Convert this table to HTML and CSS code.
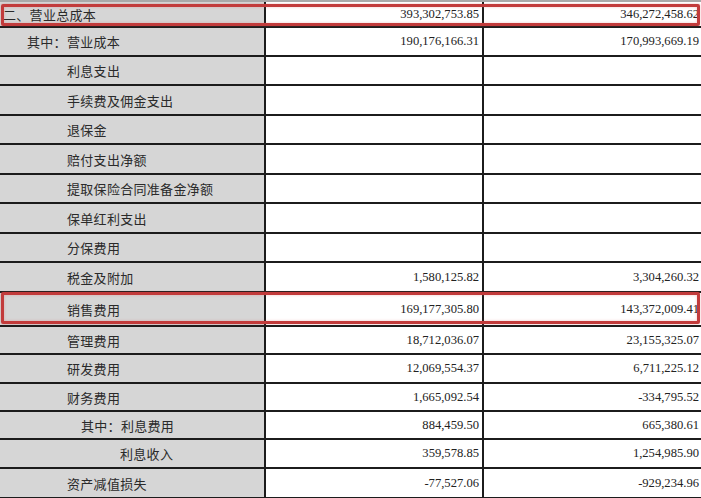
FILE: index.html
```html
<!DOCTYPE html>
<html lang="zh">
<head>
<meta charset="utf-8">
<link rel="stylesheet" href="styles.css">
</head>
<body>
<div class="sheet">
  <div class="row h26"><div class="label l0">二、营业总成本</div><div class="num">393,302,753.85</div><div class="num last">346,272,458.62</div></div>
  <div class="row h29"><div class="label l1">其中：营业成本</div><div class="num">190,176,166.31</div><div class="num last">170,993,669.19</div></div>
  <div class="row h29"><div class="label l2">利息支出</div><div class="num"></div><div class="num last"></div></div>
  <div class="row h30"><div class="label l2">手续费及佣金支出</div><div class="num"></div><div class="num last"></div></div>
  <div class="row h29"><div class="label l2">退保金</div><div class="num"></div><div class="num last"></div></div>
  <div class="row h30"><div class="label l2">赔付支出净额</div><div class="num"></div><div class="num last"></div></div>
  <div class="row h29"><div class="label l2">提取保险合同准备金净额</div><div class="num"></div><div class="num last"></div></div>
  <div class="row h30"><div class="label l2">保单红利支出</div><div class="num"></div><div class="num last"></div></div>
  <div class="row h29"><div class="label l2">分保费用</div><div class="num"></div><div class="num last"></div></div>
  <div class="row h30"><div class="label l2">税金及附加</div><div class="num">1,580,125.82</div><div class="num last">3,304,260.32</div></div>
  <div class="row h34"><div class="label l2">销售费用</div><div class="num">169,177,305.80</div><div class="num last">143,372,009.41</div></div>
  <div class="row h28"><div class="label l2">管理费用</div><div class="num">18,712,036.07</div><div class="num last">23,155,325.07</div></div>
  <div class="row h29"><div class="label l2">研发费用</div><div class="num">12,069,554.37</div><div class="num last">6,711,225.12</div></div>
  <div class="row h28"><div class="label l2">财务费用</div><div class="num">1,665,092.54</div><div class="num last">-334,795.52</div></div>
  <div class="row h28"><div class="label l3">其中：利息费用</div><div class="num">884,459.50</div><div class="num last">665,380.61</div></div>
  <div class="row h29"><div class="label l4">利息收入</div><div class="num">359,578.85</div><div class="num last">1,254,985.90</div></div>
  <div class="row h30"><div class="label l2">资产减值损失</div><div class="num">-77,527.06</div><div class="num last">-929,234.96</div></div>
  <div class="mark mark-total"></div>
  <div class="mark mark-sales"></div>
</div>
</body>
</html>
```
FILE: styles.css
```css
html, body {
  margin: 0;
  padding: 0;
  background: #ffffff;
  overflow: hidden;
}
.sheet {
  position: relative;
  width: 701px;
  border-top: 2px solid #a9a9a9;
}
.row {
  display: grid;
  grid-template-columns: 266px 218px 1fr;
  box-sizing: border-box;
  border-bottom: 2px solid #1c1c1c;
}
.h26 { height: 26px; }
.h28 { height: 28px; }
.h29 { height: 29px; }
.h30 { height: 30px; }
.h34 { height: 34px; }
.label {
  background: #d6d6d6;
  border-right: 2px solid #1c1c1c;
  display: flex;
  align-items: center;
  font-family: "Noto Sans CJK SC", "Noto Sans", sans-serif;
  font-size: 13px;
  letter-spacing: 0.3px;
  color: #2a2a2a;
}
.l0 { padding-left: 3px; }
.l1 { padding-left: 27px; }
.l2 { padding-left: 67px; }
.l3 { padding-left: 81px; }
.l4 { padding-left: 120px; }
.num {
  border-right: 2px solid #1c1c1c;
  display: flex;
  align-items: center;
  justify-content: flex-end;
  padding-right: 3px;
  font-family: "Liberation Serif", "Times New Roman", serif;
  font-size: 12.6px;
  color: #222222;
}
.num.last {
  border-right: none;
  padding-right: 2px;
}
.mark {
  position: absolute;
  left: 1px;
  right: 1px;
  border: 3px solid #c23b3b;
  border-radius: 2px;
  box-shadow: inset 0 0 3px rgba(220, 90, 90, 0.35), 0 0 2px rgba(200, 60, 60, 0.4);
  pointer-events: none;
}
.mark-total {
  top: 2px;
  height: 16px;
}
.mark-sales {
  top: 290px;
  height: 26px;
}
```
